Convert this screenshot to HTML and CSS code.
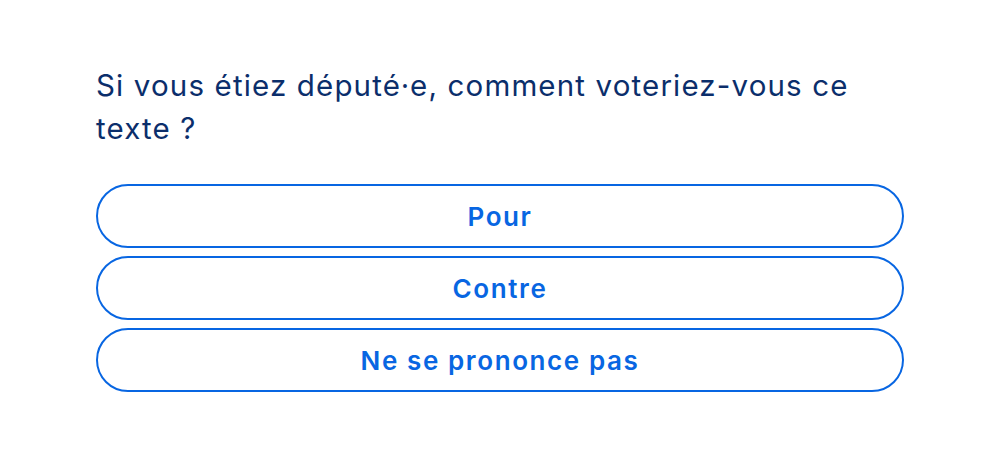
FILE: index.html
```html
<!DOCTYPE html>
<html lang="fr">
<head>
    <meta charset="UTF-8">
    <meta name="viewport" content="width=device-width, initial-scale=1.0">
    <title>Vote</title>
    <link rel="stylesheet" href="styles.css">
</head>
<body>
    <!-- Question -->
    <div class="vote">
        <p class="question">Si vous étiez député⸱e, comment voteriez-vous ce texte&nbsp;?</p>

        <!-- Choix -->
        <div class="choix">
            <button class="bouton">Pour</button>
            <button class="bouton">Contre</button>
            <button class="bouton">Ne se prononce pas</button>
        </div>
    </div>
</body>
</html>
```

FILE: styles.css
```css
body{ margin: 0; background: #fff; font-family: "Inter", "Noto Sans", sans-serif; }
.vote{ padding: 64px 96px 0 96px; }
.question{ margin: 0 0 34px 0; font-size: 29.5px; line-height: 43px; color: #0b2e6b; letter-spacing: 1.15px; }
.choix{ display: flex; flex-direction: column; gap: 8px; }
.bouton{ height: 64px; width: 100%; border: 2px solid #0866e2; border-radius: 32px; background: #fff; color: #0866e2; font-family: inherit; font-size: 26px; font-weight: 600; letter-spacing: 1.6px; cursor: pointer; }
```
